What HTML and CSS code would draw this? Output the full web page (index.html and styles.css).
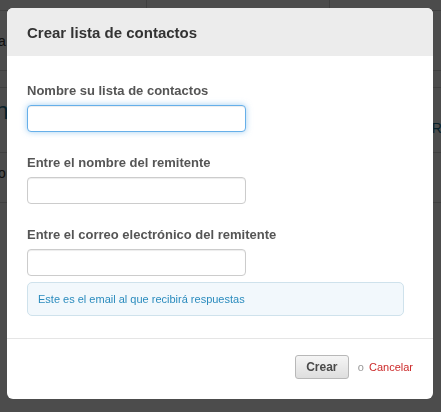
FILE: index.html
```html
<!DOCTYPE html>
<html lang="es">
<head>
<meta charset="utf-8">
<title>Crear lista de contactos</title>
<link rel="stylesheet" href="styles.css">
</head>
<body>
<div class="page">
  <div class="topbar">
    <div class="col c1"></div>
    <div class="col c2"></div>
    <div class="col c3"></div>
  </div>
  <div class="row r1"><span class="bg-text cut">Busca</span></div>
  <div class="row r2"></div>
  <div class="row r3">
    <div class="left-block">
      <span class="bg-big cut">Lista n</span>
      <span class="bg-small cut">Nueva lista de inicia</span>
    </div>
    <span class="bg-right">RIA</span>
  </div>
  <div class="row r4"><span class="bg-text cut2">No</span></div>
</div>

<div class="backdrop"></div>

<div class="modal">
  <div class="modal-header">
    <h3 class="modal-title">Crear lista de contactos</h3>
  </div>
  <div class="modal-body">
    <div class="field">
      <label class="label">Nombre su lista de contactos</label>
      <input class="input focused" type="text">
    </div>
    <div class="field">
      <label class="label">Entre el nombre del remitente</label>
      <input class="input" type="text">
    </div>
    <div class="field last">
      <label class="label">Entre el correo electrónico del remitente</label>
      <input class="input" type="text">
      <div class="help">Este es el email al que recibirá respuestas</div>
    </div>
  </div>
  <div class="modal-footer">
    <button class="btn" type="button">Crear</button>
    <span class="or">o</span>
    <a class="cancel" href="#">Cancelar</a>
  </div>
</div>
</body>
</html>
```

FILE: styles.css
```css
* { box-sizing: border-box; }

html, body {
  margin: 0;
  padding: 0;
  width: 441px;
  height: 412px;
  overflow: hidden;
  background: #ffffff;
  font-family: "Liberation Sans", Arial, sans-serif;
}

.page {
  width: 441px;
  height: 412px;
}

.topbar {
  display: flex;
  height: 11px;
  border-bottom: 1px solid #d8d8d8;
}
.col { height: 100%; }
.c1 { width: 147px; border-right: 1px solid #d8d8d8; }
.c2 { width: 183px; border-right: 1px solid #d8d8d8; }
.c3 { flex: 1; }

.row {
  border-bottom: 1px solid #d8d8d8;
  display: flex;
  justify-content: space-between;
  align-items: center;
}
.r1 { height: 60px; }
.r2 { height: 17px; }
.r3 { height: 65px; align-items: flex-start; padding-top: 10px; }
.r4 { height: 50px; align-items: flex-start; padding-top: 12px; }

.bg-text { font-size: 14px; color: #333; }
.cut { margin-left: -33px; }
.cut2 { margin-left: -12px; }
.left-block { display: flex; flex-direction: column; }
.bg-big { font-size: 24px; color: #1a6f8c; line-height: 26px; margin-left: -62px; }
.bg-small { font-size: 13px; color: #2a8bbd; margin-left: -123px; margin-top: 5px; }
.bg-right { font-size: 14px; color: #1a6f8c; margin-top: 22px; margin-right: -14px; }

.backdrop {
  position: fixed;
  inset: 0;
  background: rgba(0, 0, 0, 0.7);
}

.modal {
  position: absolute;
  left: 7px;
  top: 8px;
  width: 426px;
  height: 391px;
  background: #ffffff;
  border-radius: 6px;
  overflow: hidden;
  display: flex;
  flex-direction: column;
}

.modal-header {
  height: 48px;
  background: #ececec;
  padding: 0 20px;
  display: flex;
  align-items: center;
}
.modal-title {
  margin: 0;
  font-size: 15px;
  font-weight: bold;
  color: #333333;
}

.modal-body {
  padding: 27px 29px 22px 20px;
}
.field { display: flex; flex-direction: column; align-items: flex-start; margin-bottom: 23px; }
.field.last { margin-bottom: 0; }

.label {
  font-size: 13px;
  font-weight: bold;
  color: #555555;
  line-height: 15px;
  margin-bottom: 7px;
}

.input {
  width: 219px;
  height: 27px;
  border: 1px solid #cccccc;
  border-radius: 4px;
  background: #fff;
  padding: 4px 6px;
  font-family: inherit;
  font-size: 13px;
  outline: none;
  box-shadow: inset 0 1px 1px rgba(0,0,0,0.075);
}
.input.focused {
  border-color: #66afe9;
  box-shadow: inset 0 1px 1px rgba(0,0,0,0.075), 0 0 6px rgba(102,175,233,0.6);
}

.help {
  align-self: stretch;
  margin-top: 6px;
  height: 34px;
  background: #f2f8fc;
  border: 1px solid #cfe2ec;
  border-radius: 5px;
  padding: 0 10px;
  display: flex;
  align-items: center;
  font-size: 11px;
  color: #2a8bbd;
}

.modal-footer {
  margin-top: auto;
  border-top: 1px solid #e5e5e5;
  height: 61px;
  display: flex;
  align-items: center;
  justify-content: flex-end;
  padding: 0 20px 4px;
}

.btn {
  width: 54px;
  height: 24px;
  border: 1px solid #b8b8b8;
  border-radius: 3px;
  background: linear-gradient(#f5f5f5, #dedede);
  font-family: inherit;
  font-size: 12px;
  font-weight: bold;
  color: #4a4a4a;
  padding: 0;
}
.or {
  margin: 0 5px 0 9px;
  font-size: 11px;
  color: #999999;
}
.cancel {
  font-size: 11px;
  color: #cc2a2a;
  text-decoration: none;
}
```
